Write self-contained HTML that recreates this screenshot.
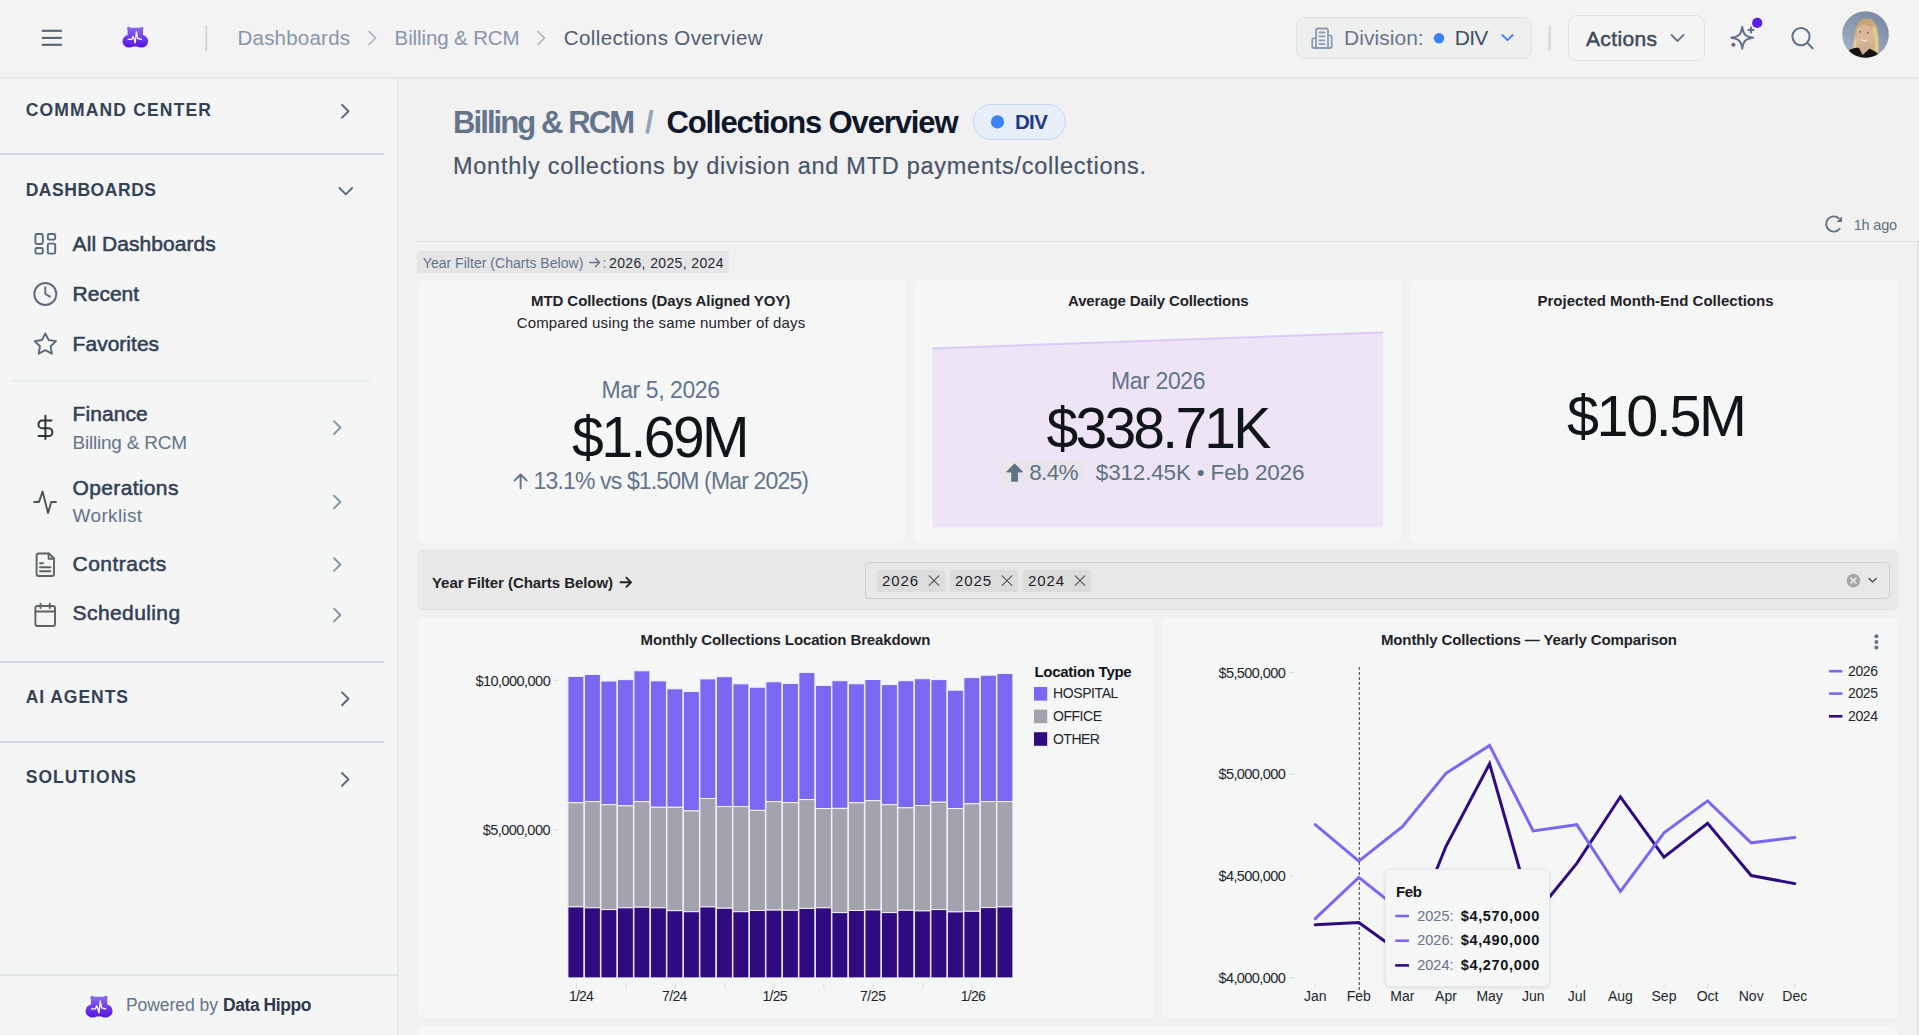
<!DOCTYPE html>
<html><head><meta charset="utf-8"><title>Collections Overview</title>
<style>
*{margin:0;padding:0;box-sizing:border-box}
html,body{width:1919px;height:1035px;overflow:hidden;background:#f1f1f1;font-family:"Liberation Sans",sans-serif}
.t{position:absolute;white-space:nowrap;line-height:1}
.b{position:absolute}
svg{position:absolute;overflow:visible}
</style></head><body>
<div class="b" style="left:0px;top:0px;width:1919px;height:78px;background:#f3f3f3"></div>
<div class="b" style="left:0px;top:77px;width:1919px;height:2px;background:#e5e8ed"></div>
<div class="b" style="left:0px;top:79px;width:398px;height:956px;background:#f4f5f5"></div>
<div class="b" style="left:397px;top:79px;width:2px;height:956px;background:#e5e8ed"></div>
<svg style="left:0;top:0" width="1919" height="78"><g stroke="#566375" stroke-width="2.1" stroke-linecap="butt"><line x1="41.8" y1="30.8" x2="61.9" y2="30.8"/><line x1="41.8" y1="37.9" x2="61.9" y2="37.9"/><line x1="41.8" y1="44.8" x2="61.9" y2="44.8"/></g><line x1="206.3" y1="25" x2="206.3" y2="51" stroke="#cfd6de" stroke-width="2"/><g fill="none" stroke="#a8b4c4" stroke-width="1.6" stroke-linecap="round" stroke-linejoin="round"><polyline points="369,31.5 375.5,38 369,44.5"/><polyline points="538,31.5 544.5,38 538,44.5"/></g></svg>
<svg style="left:122px;top:26.5px" width="26" height="21"><defs><linearGradient id="lg1" gradientUnits="userSpaceOnUse" x1="0" y1="0" x2="0" y2="21"><stop offset="0" stop-color="#8a6cf2"/><stop offset="1" stop-color="#5510de"/></linearGradient></defs><g fill="url(#lg1)"><circle cx="6.8" cy="1.6" r="1.8"/><circle cx="19.6" cy="1.6" r="1.8"/><rect x="5.6" y="0.8" width="15.4" height="14" rx="3.2"/><ellipse cx="7.2" cy="14.2" rx="6.7" ry="6.4"/><ellipse cx="19.4" cy="14.2" rx="6.7" ry="6.4"/><rect x="7" y="12" width="12" height="7.5"/></g><polyline points="6.2,12.3 9.9,12.3 11,9.4 12.1,12.1 13.2,16 14.4,4.8 15.7,11.4 19.4,12.4" fill="none" stroke="#fff" stroke-width="1.25" stroke-linejoin="round" stroke-linecap="round"/></svg>
<div class="t" style="left:237.50px;top:28.24px;font-size:20.50px;color:#8796ab;letter-spacing:0.218px;">Dashboards</div>
<div class="t" style="left:394.60px;top:28.24px;font-size:20.50px;color:#8796ab;letter-spacing:-0.120px;">Billing &amp; RCM</div>
<div class="t" style="left:563.80px;top:28.24px;font-size:20.50px;color:#4f5d72;letter-spacing:0.384px;">Collections Overview</div>
<div class="b" style="left:1296px;top:17px;width:236px;height:42px;background:#eef0f0;border:1px solid #dfe3e7;border-radius:9px"></div>
<svg style="left:0;top:0" width="1919" height="78"><g fill="none" stroke="#8d9cb1" stroke-width="1.8" stroke-linejoin="round" stroke-linecap="round"><path d="M1316,48 V30.5 a2,2 0 0 1 2,-2 H1326 a2,2 0 0 1 2,2 V48"/><path d="M1316,38.3 H1313.8 a1.6,1.6 0 0 0 -1.6,1.6 V46.3 a1.7,1.7 0 0 0 1.7,1.7 H1330 a1.7,1.7 0 0 0 1.7,-1.7 V36.9 a1.6,1.6 0 0 0 -1.6,-1.6 H1328"/><path d="M1319.3,32.5 H1324.5 M1319.3,36.4 H1324.5 M1319.3,40.3 H1324.5 M1319.3,44.2 H1324.5"/></g><circle cx="1439" cy="38.2" r="5.2" fill="#3b82f6"/><polyline points="1502.3,35 1507.5,40.2 1512.7,35" fill="none" stroke="#3b82f6" stroke-width="1.8" stroke-linecap="round" stroke-linejoin="round"/><line x1="1549.6" y1="25.5" x2="1549.6" y2="50.6" stroke="#cfd6de" stroke-width="2"/></svg>
<div class="t" style="left:1344.00px;top:27.42px;font-size:21.00px;color:#66768b;letter-spacing:0.043px;">Division:</div>
<div class="t" style="left:1454.80px;top:27.42px;font-size:21.00px;color:#415066;letter-spacing:-0.754px;">DIV</div>
<div class="b" style="left:1568px;top:15px;width:137px;height:46px;background:#f3f4f4;border:1px solid #dde2e7;border-radius:9px"></div>
<div class="t" style="left:1586.00px;top:27.62px;font-size:21.00px;color:#3d4a5c;letter-spacing:0.356px;-webkit-text-stroke:0.5px #3d4a5c">Actions</div>
<svg style="left:0;top:0" width="1919" height="78"><polyline points="1671.5,35 1677.5,41 1683.5,35" fill="none" stroke="#66768b" stroke-width="1.8" stroke-linecap="round" stroke-linejoin="round"/><g fill="none" stroke="#5f7088" stroke-width="2" stroke-linejoin="round" stroke-linecap="round"><path d="M1742.2,27 C1743.3,34.5 1745.5,36.7 1753,37.8 C1745.5,38.9 1743.3,41.1 1742.2,48.6 C1741.1,41.1 1738.9,38.9 1731.4,37.8 C1738.9,36.7 1741.1,34.5 1742.2,27 Z"/><path d="M1751,27.4 V32.4 M1748.5,29.9 H1753.5"/></g><rect x="1731.6" y="42.9" width="3.6" height="3.6" transform="rotate(45 1733.4 44.7)" fill="#5f7088"/><circle cx="1757.2" cy="22.9" r="5.1" fill="#5b1ee0"/><g fill="none" stroke="#5f7088" stroke-width="2" stroke-linecap="round"><circle cx="1801" cy="36.6" r="8.6"/><line x1="1807.3" y1="42.9" x2="1812.6" y2="48.2"/></g></svg>
<svg style="left:1842px;top:11px" width="47" height="47" viewBox="0 0 47 47"><defs><clipPath id="av"><circle cx="23.5" cy="23.5" r="23.3"/></clipPath><linearGradient id="avbg" x1="0.7" y1="0" x2="0.2" y2="1"><stop offset="0" stop-color="#7b88a3"/><stop offset="1" stop-color="#a5b3ca"/></linearGradient><linearGradient id="avh" x1="0" y1="0" x2="0.3" y2="1"><stop offset="0" stop-color="#b8996a"/><stop offset="0.6" stop-color="#d8c08a"/><stop offset="1" stop-color="#c9b384"/></linearGradient></defs><g clip-path="url(#av)"><rect width="47" height="47" fill="url(#avbg)"/><path d="M27.3,7.4 C30,8 32.5,10.6 34.5,15 C36.7,23 37.8,33.5 36.7,41.4 L33,45 L10,44 C10,40 11,33 12,28 C13,20 14,14.2 17,11 C20,8 24,7 27.3,7.4 Z" fill="url(#avh)"/><ellipse cx="22.6" cy="23.6" rx="8.2" ry="10.8" fill="#dbb69c"/><path d="M15,16 C17,11 21,9.5 26,10 C29,11 31,14 31.5,18 C29,14.5 25,13 21,13.5 C18,14 16.5,15 15,16Z" fill="#c7a56f"/><path d="M29.5,16 C32,20 33.5,27 33,36 C32.5,40 31.5,42 30,44 L35.5,44 C37,36 36,24 33,16 Z" fill="#e0cb93"/><path d="M13,28 C12.5,34 12,38 10.5,42 L14,40 C14.5,36 14.5,32 14,28 Z" fill="#e3d2a2"/><circle cx="18.3" cy="20.8" r="0.9" fill="#6b5a60"/><circle cx="25.6" cy="21.6" r="0.9" fill="#6b5a60"/><path d="M19.5,28.6 Q22.3,30.6 25.2,28.9" stroke="#f4f0ee" stroke-width="1.05" fill="none"/><path d="M17.5,32 L27,32 L27.3,37.7 L20.5,44 L17,36.7 Z" fill="#d4ae94"/><path d="M4,47 L7.5,38.8 C11,37 14,36.5 17,36.7 L20.5,44 L27.3,37.7 C31,39 34,40.5 36,43 L40,47 Z" fill="#141414"/></g></svg>
<div class="t" style="left:25.70px;top:102.08px;font-size:17.50px;color:#334155;font-weight:700;letter-spacing:1.167px;">COMMAND CENTER</div>
<div class="t" style="left:25.70px;top:182.08px;font-size:17.50px;color:#334155;font-weight:700;letter-spacing:0.542px;">DASHBOARDS</div>
<div class="t" style="left:25.70px;top:689.28px;font-size:17.50px;color:#334155;font-weight:700;letter-spacing:0.958px;">AI AGENTS</div>
<div class="t" style="left:25.70px;top:769.18px;font-size:17.50px;color:#334155;font-weight:700;letter-spacing:1.027px;">SOLUTIONS</div>
<div class="b" style="left:0px;top:153px;width:384px;height:2px;background:#d2dae3"></div>
<div class="b" style="left:12px;top:380px;width:359px;height:2px;background:#e9edf1"></div>
<div class="b" style="left:0px;top:661px;width:384px;height:2px;background:#d2dae3"></div>
<div class="b" style="left:0px;top:741px;width:384px;height:2px;background:#d2dae3"></div>
<div class="b" style="left:0px;top:974px;width:398px;height:2px;background:#dfe4e9"></div>
<div class="t" style="left:72.60px;top:233.02px;font-size:21.00px;color:#334155;letter-spacing:0.061px;-webkit-text-stroke:0.55px #334155">All Dashboards</div>
<div class="t" style="left:72.60px;top:283.02px;font-size:21.00px;color:#334155;letter-spacing:-0.007px;-webkit-text-stroke:0.55px #334155">Recent</div>
<div class="t" style="left:72.60px;top:332.82px;font-size:21.00px;color:#334155;letter-spacing:0.018px;-webkit-text-stroke:0.55px #334155">Favorites</div>
<div class="t" style="left:72.60px;top:403.12px;font-size:21.00px;color:#334155;letter-spacing:0.082px;-webkit-text-stroke:0.55px #334155">Finance</div>
<div class="t" style="left:72.60px;top:432.71px;font-size:19.00px;color:#64748b;letter-spacing:-0.224px;">Billing &amp; RCM</div>
<div class="t" style="left:72.60px;top:477.42px;font-size:21.00px;color:#334155;letter-spacing:0.342px;-webkit-text-stroke:0.55px #334155">Operations</div>
<div class="t" style="left:72.60px;top:505.91px;font-size:19.00px;color:#64748b;letter-spacing:0.328px;">Worklist</div>
<div class="t" style="left:72.60px;top:553.02px;font-size:21.00px;color:#334155;letter-spacing:0.467px;-webkit-text-stroke:0.55px #334155">Contracts</div>
<div class="t" style="left:72.60px;top:602.42px;font-size:21.00px;color:#334155;letter-spacing:0.399px;-webkit-text-stroke:0.55px #334155">Scheduling</div>
<svg style="left:0;top:0" width="398" height="1035"><g fill="none" stroke="#58697f" stroke-width="1.9" stroke-linecap="round" stroke-linejoin="round"><polyline points="342,104.8 348.5,111.2 342,117.6"/><polyline points="339.5,188 345.8,194.3 352.1,188"/><polyline points="342,692.4 348.5,698.8 342,705.2"/><polyline points="342,773 348.5,779.4 342,785.8"/></g><g fill="none" stroke="#8494a8" stroke-width="1.9" stroke-linecap="round" stroke-linejoin="round"><polyline points="334,421.20000000000005 340.4,427.6 334,434.0"/><polyline points="334,495.6 340.4,502 334,508.4"/><polyline points="334,558.1 340.4,564.5 334,570.9"/><polyline points="334,608.6 340.4,615 334,621.4"/></g><g fill="none" stroke="#5a6b80" stroke-width="1.9" stroke-linejoin="round"><rect x="35.4" y="234" width="7.4" height="10" rx="1.4"/><rect x="47.8" y="234" width="7.4" height="5.6" rx="1.4"/><rect x="35.4" y="248" width="7.4" height="5.6" rx="1.4"/><rect x="47.8" y="243.6" width="7.4" height="10" rx="1.4"/><circle cx="45.3" cy="294" r="11"/><polyline points="45.3,287.2 45.3,294 50,296.6" stroke-linecap="round"/><path d="M45.3,333.3 L48.6,340 L56,341.1 L50.65,346.3 L51.9,353.7 L45.3,350.2 L38.7,353.7 L39.95,346.3 L34.6,341.1 L42,340 Z"/></g><g fill="none" stroke="#2f3338" stroke-width="2" stroke-linecap="round" stroke-linejoin="round"><path d="M45.4,415.8 V439"/><path d="M51.5,420.5 H42.3 a3.9,3.9 0 0 0 0,7.8 H48.5 a3.9,3.9 0 0 1 0,7.8 H38.5"/></g><polyline points="34.3,502 39,502 42.6,491.4 48,513 51.3,502 56,502" fill="none" stroke="#4e5257" stroke-width="1.9" stroke-linecap="round" stroke-linejoin="round"/><g fill="none" stroke="#5f6367" stroke-width="1.9" stroke-linecap="round" stroke-linejoin="round"><path d="M49,553.5 H38.6 a2,2 0 0 0 -2,2 V574 a2,2 0 0 0 2,2 H52 a2,2 0 0 0 2,-2 V558.5 Z"/><path d="M48.6,553.5 V558.8 H54"/><path d="M40,563.2 H43 M40,567.3 H50.5 M40,571.3 H50.5"/></g><g fill="none" stroke="#5f6367" stroke-width="1.9" stroke-linecap="round" stroke-linejoin="round"><rect x="35.4" y="606" width="19.6" height="20" rx="2"/><path d="M35.4,611.5 H55 M40.5,603.6 V608 M49.8,603.6 V608"/></g></svg>
<svg style="left:85px;top:996px" width="27.5" height="22" viewBox="0 0 26 21" preserveAspectRatio="none"><defs><linearGradient id="lg2" gradientUnits="userSpaceOnUse" x1="0" y1="0" x2="0" y2="21"><stop offset="0" stop-color="#8a6cf2"/><stop offset="1" stop-color="#5510de"/></linearGradient></defs><g fill="url(#lg2)"><circle cx="6.8" cy="1.6" r="1.8"/><circle cx="19.6" cy="1.6" r="1.8"/><rect x="5.6" y="0.8" width="15.4" height="14" rx="3.2"/><ellipse cx="7.2" cy="14.2" rx="6.7" ry="6.4"/><ellipse cx="19.4" cy="14.2" rx="6.7" ry="6.4"/><rect x="7" y="12" width="12" height="7.5"/></g><polyline points="6.2,12.3 9.9,12.3 11,9.4 12.1,12.1 13.2,16 14.4,4.8 15.7,11.4 19.4,12.4" fill="none" stroke="#fff" stroke-width="1.25" stroke-linejoin="round" stroke-linecap="round"/></svg>
<div class="t" style="left:125.90px;top:997.18px;font-size:17.50px;color:#64748b;letter-spacing:-0.046px;">Powered by</div>
<div class="t" style="left:223.00px;top:997.18px;font-size:17.50px;color:#2d3748;font-weight:700;letter-spacing:-0.440px;">Data Hippo</div>
<div class="t" style="left:453.00px;top:106.75px;font-size:31.00px;color:#64748b;font-weight:700;letter-spacing:-1.910px;">Billing &amp; RCM</div>
<div class="t" style="left:645.00px;top:106.75px;font-size:31.00px;color:#94a3b8;font-weight:700;">/</div>
<div class="t" style="left:666.50px;top:106.75px;font-size:31.00px;color:#0f172a;font-weight:700;letter-spacing:-1.134px;">Collections Overview</div>
<div class="b" style="left:973px;top:104px;width:93px;height:36px;background:#e8eef8;border:1.5px solid #c3d6f5;border-radius:18px"></div>
<svg style="left:0;top:0" width="1919" height="300"><circle cx="997.5" cy="121.9" r="6.6" fill="#3b82f6"/></svg>
<div class="t" style="left:1015.00px;top:111.94px;font-size:20.50px;color:#1e3a8a;font-weight:700;letter-spacing:-0.687px;">DIV</div>
<div class="t" style="left:453.00px;top:155.10px;font-size:23.50px;color:#475569;letter-spacing:0.731px;-webkit-text-stroke:0.2px #475569">Monthly collections by division and MTD payments/collections.</div>
<svg style="left:0;top:0" width="1919" height="300"><path d="M1838.7,218.2 A7.6,7.6 0 1 0 1839.6,228.9" fill="none" stroke="#5d6f80" stroke-width="1.9" stroke-linecap="round"/><polygon points="1842,216.6 1842,222 1836.6,222" fill="#5d6f80"/></svg>
<div class="t" style="left:1853.70px;top:217.52px;font-size:14.50px;color:#5d6f80;letter-spacing:-0.170px;">1h ago</div>
<div class="b" style="left:417px;top:240.5px;width:1502px;height:1.3000000000000114px;background:#dfe0e2"></div>
<div class="b" style="left:417px;top:251px;width:312px;height:22px;background:#e5e5e5;border-radius:4px"></div>
<div class="t" style="left:422.80px;top:255.65px;font-size:14.00px;color:#64748b;letter-spacing:0.030px;">Year Filter (Charts Below)</div>
<svg style="left:0;top:0" width="1919" height="300"><g fill="none" stroke="#64748b" stroke-width="1.3" stroke-linecap="round" stroke-linejoin="round"><path d="M589.8,262.5 H599.6 M595.6,258.5 L599.6,262.5 L595.6,266.5"/></g></svg>
<div class="t" style="left:602.50px;top:255.65px;font-size:14.00px;color:#64748b;">:</div>
<div class="t" style="left:609.00px;top:255.65px;font-size:14.00px;color:#1f2937;letter-spacing:0.367px;">2026, 2025, 2024</div>
<div class="b" style="left:417px;top:280px;width:489px;height:263px;background:#f5f6f6;border-radius:6px"></div>
<div class="b" style="left:913px;top:280px;width:489px;height:263px;background:#f5f6f6;border-radius:6px"></div>
<div class="b" style="left:1410px;top:280px;width:489px;height:263px;background:#f5f6f6;border-radius:6px"></div>
<div class="t" style="left:531.00px;top:293.30px;font-size:15.00px;color:#1f2328;font-weight:700;letter-spacing:-0.073px;">MTD Collections (Days Aligned YOY)</div>
<div class="t" style="left:516.70px;top:314.50px;font-size:15.00px;color:#1f2328;letter-spacing:0.136px;">Compared using the same number of days</div>
<div class="t" style="left:601.50px;top:378.53px;font-size:23.00px;color:#64748b;letter-spacing:-0.424px;">Mar 5, 2026</div>
<div class="t" style="left:572.00px;top:408.54px;font-size:57.00px;color:#111418;letter-spacing:-2.504px;">$1.69M</div>
<svg style="left:0;top:0" width="1919" height="600"><g fill="none" stroke="#64748b" stroke-width="1.9" stroke-linecap="round" stroke-linejoin="round"><path d="M520.6,488.3 V474.5 M514.5,480.6 L520.6,474.5 L526.7,480.6"/></g></svg>
<div class="t" style="left:533.50px;top:469.53px;font-size:23.00px;color:#64748b;letter-spacing:-0.843px;">13.1% vs $1.50M (Mar 2025)</div>
<div class="t" style="left:1068.00px;top:293.30px;font-size:15.00px;color:#1f2328;font-weight:700;letter-spacing:-0.132px;">Average Daily Collections</div>
<svg style="left:0;top:0" width="1919" height="600"><polygon points="932.5,349 1383,333 1383,527.5 932.5,527.5" fill="#ede5f5"/><line x1="932.5" y1="348.5" x2="1383" y2="332.5" stroke="#dccbf6" stroke-width="2"/></svg>
<div class="t" style="left:1111.00px;top:370.33px;font-size:23.00px;color:#64748b;letter-spacing:-0.381px;">Mar 2026</div>
<div class="t" style="left:1046.50px;top:400.34px;font-size:57.00px;color:#111418;letter-spacing:-2.751px;">$338.71K</div>
<div class="b" style="left:1000px;top:459.5px;width:85px;height:26.0px;background:#e8e6ec;border-radius:5px"></div>
<svg style="left:0;top:0" width="1919" height="600"><path d="M1014.6,463.8 L1022.8,472 L1017.6,472 L1017.6,481.3 L1011.6,481.3 L1011.6,472 L1006.4,472 Z" fill="#5f7282" stroke="#5f7282" stroke-width="0.8" stroke-linejoin="round"/></svg>
<div class="t" style="left:1029.20px;top:461.95px;font-size:22.50px;color:#5f7282;letter-spacing:-0.628px;">8.4%</div>
<div class="t" style="left:1095.80px;top:461.95px;font-size:22.50px;color:#5f7282;letter-spacing:-0.177px;">$312.45K • Feb 2026</div>
<div class="t" style="left:1537.50px;top:293.30px;font-size:15.00px;color:#1f2328;font-weight:700;letter-spacing:0.005px;">Projected Month-End Collections</div>
<div class="t" style="left:1567.00px;top:388.31px;font-size:57.50px;color:#111418;letter-spacing:-2.358px;">$10.5M</div>
<div class="b" style="left:417px;top:550px;width:1482px;height:60px;background:#e9e9e9;border-radius:7px;box-shadow:inset 0 1px 0 #e4e4e4,inset 0 -1px 0 #e2e2e2"></div>
<div class="t" style="left:432.00px;top:574.80px;font-size:15.00px;color:#1f2328;font-weight:700;letter-spacing:-0.062px;">Year Filter (Charts Below)</div>
<svg style="left:0;top:0" width="1919" height="620"><g fill="none" stroke="#1f2328" stroke-width="1.9" stroke-linecap="round" stroke-linejoin="round"><path d="M620.5,582.3 H631 M626.4,577.7 L631,582.3 L626.4,586.9"/></g></svg>
<div class="b" style="left:865px;top:562px;width:1025px;height:37px;background:#e8e8e8;border:1px solid #cfd2d0;border-radius:4px"></div>
<div class="b" style="left:877px;top:569.5px;width:68px;height:22.0px;background:#dcdcdc;border-radius:3px"></div>
<div class="t" style="left:882.00px;top:573.10px;font-size:15.00px;color:#1f2328;letter-spacing:0.877px;">2026</div>
<svg style="left:0;top:0" width="1919" height="620"><g stroke="#5a5a5a" stroke-width="1.15" stroke-linecap="round"><line x1="929.2" y1="575.8" x2="938.8" y2="585.4"/><line x1="938.8" y1="575.8" x2="929.2" y2="585.4"/></g></svg>
<div class="b" style="left:950px;top:569.5px;width:68px;height:22.0px;background:#dcdcdc;border-radius:3px"></div>
<div class="t" style="left:955.00px;top:573.10px;font-size:15.00px;color:#1f2328;letter-spacing:0.877px;">2025</div>
<svg style="left:0;top:0" width="1919" height="620"><g stroke="#5a5a5a" stroke-width="1.15" stroke-linecap="round"><line x1="1002.2" y1="575.8" x2="1011.8" y2="585.4"/><line x1="1011.8" y1="575.8" x2="1002.2" y2="585.4"/></g></svg>
<div class="b" style="left:1023px;top:569.5px;width:68px;height:22.0px;background:#dcdcdc;border-radius:3px"></div>
<div class="t" style="left:1028.00px;top:573.10px;font-size:15.00px;color:#1f2328;letter-spacing:0.877px;">2024</div>
<svg style="left:0;top:0" width="1919" height="620"><g stroke="#5a5a5a" stroke-width="1.15" stroke-linecap="round"><line x1="1075.2" y1="575.8" x2="1084.8" y2="585.4"/><line x1="1084.8" y1="575.8" x2="1075.2" y2="585.4"/></g></svg>
<svg style="left:0;top:0" width="1919" height="620"><circle cx="1853.4" cy="580.6" r="6.8" fill="#a8a8a8"/><g stroke="#e8e8e8" stroke-width="1.5" stroke-linecap="round"><line x1="1850.9" y1="578.1" x2="1855.9" y2="583.1"/><line x1="1855.9" y1="578.1" x2="1850.9" y2="583.1"/></g><polyline points="1869.2,578.6 1872.6,582 1876,578.6" fill="none" stroke="#555f6b" stroke-width="1.6" stroke-linecap="round" stroke-linejoin="round"/></svg>
<div class="b" style="left:417px;top:618px;width:737px;height:400px;background:#f5f6f6;border-radius:6px"></div>
<div class="b" style="left:1162px;top:618px;width:737px;height:400px;background:#f5f6f6;border-radius:6px"></div>
<div class="b" style="left:417px;top:1026px;width:1482px;height:9px;background:#f5f6f6;border-radius:6px;border-radius:8px 8px 0 0"></div>
<div class="b" style="left:1916.5px;top:241px;width:1.2999999999999545px;height:794px;background:#dcdcdc"></div>
<svg style="left:0;top:0" width="1919" height="1035"><g stroke="#f2f4f4" stroke-width="1"><rect x="567.90" y="676.40" width="16.00" height="126.40" fill="#7b68f2"/><rect x="567.90" y="802.80" width="16.00" height="104.10" fill="#a3a2ae"/><rect x="567.90" y="906.90" width="16.00" height="71.00" fill="#300a80"/><rect x="584.40" y="674.50" width="16.00" height="127.10" fill="#7b68f2"/><rect x="584.40" y="801.60" width="16.00" height="106.20" fill="#a3a2ae"/><rect x="584.40" y="907.80" width="16.00" height="70.10" fill="#300a80"/><rect x="600.90" y="681.00" width="16.00" height="123.70" fill="#7b68f2"/><rect x="600.90" y="804.70" width="16.00" height="104.90" fill="#a3a2ae"/><rect x="600.90" y="909.60" width="16.00" height="68.30" fill="#300a80"/><rect x="617.40" y="679.60" width="16.00" height="126.20" fill="#7b68f2"/><rect x="617.40" y="805.80" width="16.00" height="102.00" fill="#a3a2ae"/><rect x="617.40" y="907.80" width="16.00" height="70.10" fill="#300a80"/><rect x="633.90" y="670.80" width="16.00" height="130.80" fill="#7b68f2"/><rect x="633.90" y="801.60" width="16.00" height="105.60" fill="#a3a2ae"/><rect x="633.90" y="907.20" width="16.00" height="70.70" fill="#300a80"/><rect x="650.40" y="680.90" width="16.00" height="126.40" fill="#7b68f2"/><rect x="650.40" y="807.30" width="16.00" height="100.50" fill="#a3a2ae"/><rect x="650.40" y="907.80" width="16.00" height="70.10" fill="#300a80"/><rect x="666.90" y="688.80" width="16.00" height="118.50" fill="#7b68f2"/><rect x="666.90" y="807.30" width="16.00" height="103.40" fill="#a3a2ae"/><rect x="666.90" y="910.70" width="16.00" height="67.20" fill="#300a80"/><rect x="683.40" y="691.50" width="16.00" height="119.40" fill="#7b68f2"/><rect x="683.40" y="810.90" width="16.00" height="100.80" fill="#a3a2ae"/><rect x="683.40" y="911.70" width="16.00" height="66.20" fill="#300a80"/><rect x="699.90" y="678.90" width="16.00" height="119.60" fill="#7b68f2"/><rect x="699.90" y="798.50" width="16.00" height="108.40" fill="#a3a2ae"/><rect x="699.90" y="906.90" width="16.00" height="71.00" fill="#300a80"/><rect x="716.40" y="676.70" width="16.00" height="129.90" fill="#7b68f2"/><rect x="716.40" y="806.60" width="16.00" height="101.60" fill="#a3a2ae"/><rect x="716.40" y="908.20" width="16.00" height="69.70" fill="#300a80"/><rect x="732.90" y="683.80" width="16.00" height="122.80" fill="#7b68f2"/><rect x="732.90" y="806.60" width="16.00" height="105.10" fill="#a3a2ae"/><rect x="732.90" y="911.70" width="16.00" height="66.20" fill="#300a80"/><rect x="749.40" y="687.20" width="16.00" height="123.20" fill="#7b68f2"/><rect x="749.40" y="810.40" width="16.00" height="100.10" fill="#a3a2ae"/><rect x="749.40" y="910.50" width="16.00" height="67.40" fill="#300a80"/><rect x="765.90" y="681.80" width="16.00" height="119.80" fill="#7b68f2"/><rect x="765.90" y="801.60" width="16.00" height="108.50" fill="#a3a2ae"/><rect x="765.90" y="910.10" width="16.00" height="67.80" fill="#300a80"/><rect x="782.40" y="683.50" width="16.00" height="119.20" fill="#7b68f2"/><rect x="782.40" y="802.70" width="16.00" height="107.60" fill="#a3a2ae"/><rect x="782.40" y="910.30" width="16.00" height="67.60" fill="#300a80"/><rect x="798.90" y="672.40" width="16.00" height="127.20" fill="#7b68f2"/><rect x="798.90" y="799.60" width="16.00" height="108.80" fill="#a3a2ae"/><rect x="798.90" y="908.40" width="16.00" height="69.50" fill="#300a80"/><rect x="815.40" y="685.40" width="16.00" height="123.20" fill="#7b68f2"/><rect x="815.40" y="808.60" width="16.00" height="99.20" fill="#a3a2ae"/><rect x="815.40" y="907.80" width="16.00" height="70.10" fill="#300a80"/><rect x="831.90" y="680.70" width="16.00" height="127.70" fill="#7b68f2"/><rect x="831.90" y="808.40" width="16.00" height="104.20" fill="#a3a2ae"/><rect x="831.90" y="912.60" width="16.00" height="65.30" fill="#300a80"/><rect x="848.40" y="683.80" width="16.00" height="119.00" fill="#7b68f2"/><rect x="848.40" y="802.80" width="16.00" height="107.70" fill="#a3a2ae"/><rect x="848.40" y="910.50" width="16.00" height="67.40" fill="#300a80"/><rect x="864.90" y="679.50" width="16.00" height="121.20" fill="#7b68f2"/><rect x="864.90" y="800.70" width="16.00" height="109.20" fill="#a3a2ae"/><rect x="864.90" y="909.90" width="16.00" height="68.00" fill="#300a80"/><rect x="881.40" y="684.60" width="16.00" height="120.10" fill="#7b68f2"/><rect x="881.40" y="804.70" width="16.00" height="107.90" fill="#a3a2ae"/><rect x="881.40" y="912.60" width="16.00" height="65.30" fill="#300a80"/><rect x="897.90" y="680.70" width="16.00" height="127.10" fill="#7b68f2"/><rect x="897.90" y="807.80" width="16.00" height="102.50" fill="#a3a2ae"/><rect x="897.90" y="910.30" width="16.00" height="67.60" fill="#300a80"/><rect x="914.40" y="678.70" width="16.00" height="126.80" fill="#7b68f2"/><rect x="914.40" y="805.50" width="16.00" height="105.40" fill="#a3a2ae"/><rect x="914.40" y="910.90" width="16.00" height="67.00" fill="#300a80"/><rect x="930.90" y="679.60" width="16.00" height="122.60" fill="#7b68f2"/><rect x="930.90" y="802.20" width="16.00" height="107.40" fill="#a3a2ae"/><rect x="930.90" y="909.60" width="16.00" height="68.30" fill="#300a80"/><rect x="947.40" y="690.20" width="16.00" height="118.40" fill="#7b68f2"/><rect x="947.40" y="808.60" width="16.00" height="103.30" fill="#a3a2ae"/><rect x="947.40" y="911.90" width="16.00" height="66.00" fill="#300a80"/><rect x="963.90" y="677.60" width="16.00" height="126.20" fill="#7b68f2"/><rect x="963.90" y="803.80" width="16.00" height="107.50" fill="#a3a2ae"/><rect x="963.90" y="911.30" width="16.00" height="66.60" fill="#300a80"/><rect x="980.40" y="675.20" width="16.00" height="126.40" fill="#7b68f2"/><rect x="980.40" y="801.60" width="16.00" height="106.00" fill="#a3a2ae"/><rect x="980.40" y="907.60" width="16.00" height="70.30" fill="#300a80"/><rect x="996.90" y="673.50" width="16.00" height="128.10" fill="#7b68f2"/><rect x="996.90" y="801.60" width="16.00" height="105.30" fill="#a3a2ae"/><rect x="996.90" y="906.90" width="16.00" height="71.00" fill="#300a80"/></g><g stroke="#dcdcdc" stroke-width="1"><line x1="553.5" y1="680.2" x2="559" y2="680.2"/><line x1="553.5" y1="829.8" x2="559" y2="829.8"/><line x1="576.45" y1="983.5" x2="576.45" y2="988.5"/><line x1="625.95" y1="983.5" x2="625.95" y2="988.5"/><line x1="675.45" y1="983.5" x2="675.45" y2="988.5"/><line x1="724.95" y1="983.5" x2="724.95" y2="988.5"/><line x1="774.45" y1="983.5" x2="774.45" y2="988.5"/><line x1="823.95" y1="983.5" x2="823.95" y2="988.5"/><line x1="873.45" y1="983.5" x2="873.45" y2="988.5"/><line x1="922.95" y1="983.5" x2="922.95" y2="988.5"/><line x1="972.45" y1="983.5" x2="972.45" y2="988.5"/></g><rect x="1034" y="687" width="13.2" height="13.6" fill="#7b68f2"/><rect x="1034" y="709.6" width="13.2" height="13.6" fill="#a3a2ae"/><rect x="1034" y="732.2" width="13.2" height="13.6" fill="#300a80"/></svg>
<div class="t" style="left:640.60px;top:632.30px;font-size:15.00px;color:#1f2328;font-weight:700;letter-spacing:-0.121px;">Monthly Collections Location Breakdown</div>
<div class="t" style="left:475.50px;top:673.72px;font-size:14.50px;color:#22262b;letter-spacing:-0.543px;">$10,000,000</div>
<div class="t" style="left:482.70px;top:822.72px;font-size:14.50px;color:#22262b;letter-spacing:-0.530px;">$5,000,000</div>
<div class="t" style="left:569.00px;top:989.15px;font-size:14.00px;color:#22262b;letter-spacing:-0.849px;">1/24</div>
<div class="t" style="left:662.00px;top:989.15px;font-size:14.00px;color:#22262b;letter-spacing:-0.616px;">7/24</div>
<div class="t" style="left:762.60px;top:989.15px;font-size:14.00px;color:#22262b;letter-spacing:-0.783px;">1/25</div>
<div class="t" style="left:860.00px;top:989.15px;font-size:14.00px;color:#22262b;letter-spacing:-0.416px;">7/25</div>
<div class="t" style="left:960.80px;top:989.15px;font-size:14.00px;color:#22262b;letter-spacing:-0.783px;">1/26</div>
<div class="t" style="left:1034.40px;top:663.60px;font-size:15.00px;color:#111418;font-weight:700;letter-spacing:-0.272px;">Location Type</div>
<div class="t" style="left:1053.00px;top:686.35px;font-size:14.00px;color:#22262b;letter-spacing:-0.400px;">HOSPITAL</div>
<div class="t" style="left:1053.00px;top:709.15px;font-size:14.00px;color:#22262b;letter-spacing:-0.466px;">OFFICE</div>
<div class="t" style="left:1053.00px;top:732.05px;font-size:14.00px;color:#22262b;letter-spacing:-0.525px;">OTHER</div>
<svg style="left:0;top:0" width="1919" height="1035"><g stroke="#dcdcdc" stroke-width="1"><line x1="1288.6" y1="672.7" x2="1294" y2="672.7"/><line x1="1288.6" y1="774.3" x2="1294" y2="774.3"/><line x1="1288.6" y1="875.9" x2="1294" y2="875.9"/><line x1="1288.6" y1="977.8" x2="1294" y2="977.8"/><line x1="1315.2" y1="983.3" x2="1315.2" y2="988"/><line x1="1358.8" y1="983.3" x2="1358.8" y2="988"/><line x1="1402.4" y1="983.3" x2="1402.4" y2="988"/><line x1="1446.0" y1="983.3" x2="1446.0" y2="988"/><line x1="1489.6" y1="983.3" x2="1489.6" y2="988"/><line x1="1533.2" y1="983.3" x2="1533.2" y2="988"/><line x1="1576.8" y1="983.3" x2="1576.8" y2="988"/><line x1="1620.4" y1="983.3" x2="1620.4" y2="988"/><line x1="1664.0" y1="983.3" x2="1664.0" y2="988"/><line x1="1707.6" y1="983.3" x2="1707.6" y2="988"/><line x1="1751.2" y1="983.3" x2="1751.2" y2="988"/><line x1="1794.8" y1="983.3" x2="1794.8" y2="988"/></g><line x1="1359.3" y1="667" x2="1359.3" y2="990" stroke="#3d3d3d" stroke-width="1" stroke-dasharray="3 2"/><polyline points="1315.2,924.8 1358.8,922.6 1402.4,953.8 1446.0,846.3 1489.6,763.8 1533.2,917.0 1576.8,863.4 1620.4,796.8 1664.0,857.1 1707.6,823.3 1751.2,875.5 1794.8,883.6" fill="none" stroke="#300a80" stroke-width="3" stroke-linejoin="miter" stroke-miterlimit="3" stroke-linecap="round"/><polyline points="1315.2,824.7 1358.8,861.1 1402.4,826.6 1446.0,773.3 1489.6,745.4 1533.2,830.9 1576.8,824.7 1620.4,891.5 1664.0,832.8 1707.6,800.9 1751.2,842.8 1794.8,837.4" fill="none" stroke="#7b68f2" stroke-width="3" stroke-linejoin="miter" stroke-miterlimit="3" stroke-linecap="round"/><polyline points="1315.2,918.6 1358.8,877.4 1402.4,912.0" fill="none" stroke="#7b68f2" stroke-width="3" stroke-linejoin="miter" stroke-miterlimit="3" stroke-linecap="round"/><g stroke-width="2.6"><line x1="1829" y1="671.2" x2="1842.4" y2="671.2" stroke="#7b68f2"/><line x1="1829" y1="693.6" x2="1842.4" y2="693.6" stroke="#7b68f2"/><line x1="1829" y1="716.3" x2="1842.4" y2="716.3" stroke="#300a80"/></g><g fill="#64748b"><circle cx="1876.4" cy="636.2" r="2"/><circle cx="1876.4" cy="641.9" r="2"/><circle cx="1876.4" cy="647.6" r="2"/></g></svg>
<div class="t" style="left:1381.00px;top:632.30px;font-size:15.00px;color:#1f2328;font-weight:700;letter-spacing:-0.143px;">Monthly Collections — Yearly Comparison</div>
<div class="t" style="left:1218.40px;top:665.72px;font-size:14.50px;color:#22262b;letter-spacing:-0.563px;">$5,500,000</div>
<div class="t" style="left:1218.40px;top:767.12px;font-size:14.50px;color:#22262b;letter-spacing:-0.563px;">$5,000,000</div>
<div class="t" style="left:1218.40px;top:868.72px;font-size:14.50px;color:#22262b;letter-spacing:-0.563px;">$4,500,000</div>
<div class="t" style="left:1218.40px;top:970.52px;font-size:14.50px;color:#22262b;letter-spacing:-0.563px;">$4,000,000</div>
<div class="t" style="left:1303.91px;top:988.85px;font-size:14.00px;color:#22262b;">Jan</div>
<div class="t" style="left:1346.74px;top:988.85px;font-size:14.00px;color:#22262b;">Feb</div>
<div class="t" style="left:1390.34px;top:988.85px;font-size:14.00px;color:#22262b;">Mar</div>
<div class="t" style="left:1435.11px;top:988.85px;font-size:14.00px;color:#22262b;">Apr</div>
<div class="t" style="left:1476.38px;top:988.85px;font-size:14.00px;color:#22262b;">May</div>
<div class="t" style="left:1521.91px;top:988.85px;font-size:14.00px;color:#22262b;">Jun</div>
<div class="t" style="left:1567.85px;top:988.85px;font-size:14.00px;color:#22262b;">Jul</div>
<div class="t" style="left:1607.94px;top:988.85px;font-size:14.00px;color:#22262b;">Aug</div>
<div class="t" style="left:1651.54px;top:988.85px;font-size:14.00px;color:#22262b;">Sep</div>
<div class="t" style="left:1696.71px;top:988.85px;font-size:14.00px;color:#22262b;">Oct</div>
<div class="t" style="left:1738.75px;top:988.85px;font-size:14.00px;color:#22262b;">Nov</div>
<div class="t" style="left:1782.35px;top:988.85px;font-size:14.00px;color:#22262b;">Dec</div>
<div class="t" style="left:1848.00px;top:664.05px;font-size:14.00px;color:#22262b;letter-spacing:-0.381px;">2026</div>
<div class="t" style="left:1848.00px;top:686.35px;font-size:14.00px;color:#22262b;letter-spacing:-0.381px;">2025</div>
<div class="t" style="left:1848.00px;top:709.15px;font-size:14.00px;color:#22262b;letter-spacing:-0.381px;">2024</div>
<div class="b" style="left:1385px;top:868.5px;width:165px;height:118.5px;background:#f5f6f6;border:1px solid #e6e7e8;border-radius:6px;box-shadow:0 1px 4px rgba(0,0,0,0.10)"></div>
<div class="t" style="left:1396.00px;top:884.30px;font-size:15.00px;color:#111418;font-weight:700;letter-spacing:-0.334px;">Feb</div>
<svg style="left:0;top:0" width="1919" height="1035"><g stroke-width="2.6"><line x1="1395.2" y1="916" x2="1409" y2="916" stroke="#7b68f2"/><line x1="1395.2" y1="940.7" x2="1409" y2="940.7" stroke="#7b68f2"/><line x1="1395.2" y1="965.4" x2="1409" y2="965.4" stroke="#300a80"/></g></svg>
<div class="t" style="left:1417.20px;top:908.62px;font-size:14.50px;color:#64748b;">2025:</div>
<div class="t" style="left:1460.70px;top:908.62px;font-size:14.50px;color:#111418;font-weight:700;letter-spacing:0.670px;">$4,570,000</div>
<div class="t" style="left:1417.20px;top:933.42px;font-size:14.50px;color:#64748b;">2026:</div>
<div class="t" style="left:1460.70px;top:933.42px;font-size:14.50px;color:#111418;font-weight:700;letter-spacing:0.670px;">$4,490,000</div>
<div class="t" style="left:1417.20px;top:958.12px;font-size:14.50px;color:#64748b;">2024:</div>
<div class="t" style="left:1460.70px;top:958.12px;font-size:14.50px;color:#111418;font-weight:700;letter-spacing:0.670px;">$4,270,000</div>
</body></html>
